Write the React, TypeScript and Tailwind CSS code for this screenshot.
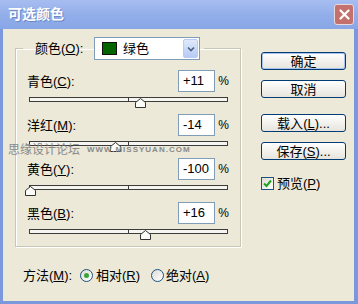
import React from 'react'

const FONT = { fontFamily: '"Liberation Sans", "Noto Sans CJK SC", sans-serif' }

const rows = [
  { label: '青色', key: 'C', value: 11 },
  { label: '洋红', key: 'M', value: -14 },
  { label: '黄色', key: 'Y', value: -100 },
  { label: '黑色', key: 'B', value: 16 },
]

function Key({ k }: { k: string }) {
  return (
    <>
      (<span className="underline underline-offset-[1px]">{k}</span>)
    </>
  )
}

function Track({ value }: { value: number }) {
  const left = ((value + 100) / 200) * 199 - 5.5
  return (
    <div className="relative h-[5px] mt-[5px] ml-[2px] mr-[1px] border border-[#3c3c3c] bg-[#f6f5ef]">
      <div className="absolute left-[98px] top-[-1px] w-px h-[5px] bg-[#3c3c3c]" />
      <svg className="absolute top-[0px]" style={{ left }} width="11" height="10" viewBox="0 0 11 10">
        <polygon points="0.5,9.5 0.5,4.5 5.5,0.5 10.5,4.5 10.5,9.5" fill="#fbfbf8" stroke="#333" strokeWidth="1" />
      </svg>
    </div>
  )
}

function Button({ children, primary }: { children: React.ReactNode; primary?: boolean }) {
  return (
    <div
      className={`w-[85px] h-[18px] rounded-[3px] border border-[#003c74] bg-gradient-to-b from-white to-[#e6e4dc] flex items-center justify-center text-[13px] leading-none text-black ${
        primary ? 'shadow-[inset_0_0_0_1px_#a8c4ee]' : ''
      }`}
    >
      {children}
    </div>
  )
}

function Radio({ checked }: { checked?: boolean }) {
  return (
    <div className="w-[13px] h-[13px] rounded-full border border-[#1c5180] bg-gradient-to-br from-[#dcdbd3] to-white flex items-center justify-center">
      {checked && <div className="w-[5px] h-[5px] rounded-full bg-[#3aa33a]" />}
    </div>
  )
}

export default function App() {
  return (
    <div className="relative w-[358px] h-[304px] bg-[#7b98dc] flex flex-col text-black" style={FONT}>
      <div className="h-[29px] flex items-center justify-between pl-[8px] pr-[4px] bg-gradient-to-b from-[#a6bdf0] via-[#93afea] to-[#88a5e6]">
        <span className="text-[14px] font-bold text-white [text-shadow:1px_1px_0_#6d86c4]">可选颜色</span>
        <div className="w-[20px] h-[21px] rounded-[3px] border border-[#e9d9dc] bg-[#c4706d] flex items-center justify-center">
          <svg width="11" height="11" viewBox="0 0 11 11">
            <path d="M1.5 1.5 L9.5 9.5 M9.5 1.5 L1.5 9.5" stroke="white" strokeWidth="2.2" strokeLinecap="round" />
          </svg>
        </div>
      </div>

      <div className="flex-1 ml-[3px] mr-[4px] mb-[3px] bg-[#ece9d8] flex">
        <div className="pl-[12px] pt-[8px] flex flex-col">
          <fieldset className="w-[226px] border border-[#c9c6b6] px-[11px] shadow-[inset_1px_1px_0_white,1px_1px_0_white]">
            <legend className="ml-[-4px] pl-[12px] pr-[4px] flex items-center h-[23px]">
              <span className="w-[59px] text-[13px] leading-none">
                颜色<Key k="O" />:
              </span>
              <div className="w-[106px] h-[23px] border border-[#7f9db9] bg-white flex items-center">
                <div className="ml-[7px] w-[15px] h-[13px] bg-[#006400] border border-[#111]" />
                <span className="ml-[6px] text-[13px] leading-none">绿色</span>
                <div className="ml-auto mr-[1px] w-[15px] h-[19px] rounded-[2px] border border-[#b9ccf3] bg-gradient-to-b from-[#e0e9fb] to-[#b6cbf5] flex items-center justify-center">
                  <svg width="8" height="6" viewBox="0 0 8 6">
                    <path d="M1 1.5 L4 4.5 L7 1.5" stroke="#4d6185" strokeWidth="1.6" fill="none" />
                  </svg>
                </div>
              </div>
            </legend>
            <div className="mt-[10px]">
              {rows.map((r) => (
                <div key={r.key} className="mb-[12px]">
                  <div className="flex items-center h-[22px]">
                    <span className="flex-1 text-[13px] leading-none">
                      {r.label}
                      <Key k={r.key} />:
                    </span>
                    <div className="w-[37px] h-[22px] border border-[#7f9db9] bg-white flex items-center px-[4px] text-[13px]">
                      {r.value > 0 ? `+${r.value}` : r.value}
                    </div>
                    <span className="w-[14px] text-right text-[12px]">%</span>
                  </div>
                  <Track value={r.value} />
                </div>
              ))}
            </div>
          </fieldset>

          <div className="mt-[17px] h-[22px] flex items-center pl-[8px] text-[13px] leading-none">
            <span className="w-[57px]">
              方法<Key k="M" />:
            </span>
            <div className="w-[71px] flex items-center">
              <Radio checked />
              <span className="ml-[3px]">
                相对<Key k="R" />
              </span>
            </div>
            <div className="flex items-center">
              <Radio />
              <span className="ml-[2px]">
                绝对<Key k="A" />
              </span>
            </div>
          </div>
        </div>

        <div className="ml-[20px] pt-[23px] flex flex-col">
          <Button primary>确定</Button>
          <div className="mt-[10px]">
            <Button>取消</Button>
          </div>
          <div className="mt-[16px]">
            <Button>
              载入<Key k="L" />...
            </Button>
          </div>
          <div className="mt-[10px]">
            <Button>
              保存<Key k="S" />...
            </Button>
          </div>
          <div className="mt-[17px] flex items-center text-[13px] leading-none">
            <div className="w-[13px] h-[13px] border border-[#1c5180] bg-gradient-to-br from-[#dcdbd3] to-white flex items-center justify-center">
              <svg width="9" height="9" viewBox="0 0 9 9">
                <path d="M1 4.5 L3.5 7 L8 1.5" stroke="#21a121" strokeWidth="2" fill="none" />
              </svg>
            </div>
            <span className="ml-[3px]">
              预览<Key k="P" />
            </span>
          </div>
        </div>
      </div>

      <div className="absolute left-[8px] top-[144px] flex items-center text-[#8a8a8a] pointer-events-none">
        <span className="text-[12px] leading-none">思缘设计论坛</span>
        <span className="ml-[7px] text-[8px] leading-none tracking-[1px] font-bold">WWW.MISSYUAN.COM</span>
      </div>
    </div>
  )
}
